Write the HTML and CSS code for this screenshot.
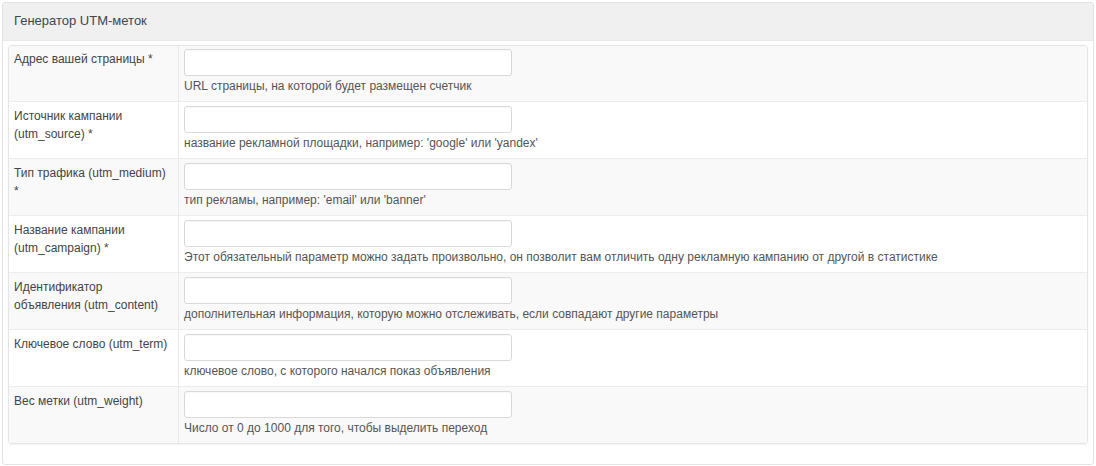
FILE: index.html
```html
<!DOCTYPE html>
<html lang="ru">
<head>
<meta charset="utf-8">
<title>Генератор UTM-меток</title>
<link rel="stylesheet" href="styles.css">
</head>
<body>
<div class="panel">
  <div class="panel-heading">Генератор UTM-меток</div>
  <div class="panel-body">
    <div class="form-table">
      <div class="row">
        <div class="label">Адрес вашей страницы *</div>
        <div class="field"><input class="input" type="text"><div class="help">URL страницы, на которой будет размещен счетчик</div></div>
      </div>
      <div class="row">
        <div class="label">Источник кампании (utm_source) *</div>
        <div class="field"><input class="input" type="text"><div class="help">название рекламной площадки, например: 'google' или 'yandex'</div></div>
      </div>
      <div class="row">
        <div class="label">Тип трафика (utm_medium) *</div>
        <div class="field"><input class="input" type="text"><div class="help">тип рекламы, например: 'email' или 'banner'</div></div>
      </div>
      <div class="row">
        <div class="label">Название кампании (utm_campaign) *</div>
        <div class="field"><input class="input" type="text"><div class="help">Этот обязательный параметр можно задать произвольно, он позволит вам отличить одну рекламную кампанию от другой в статистике</div></div>
      </div>
      <div class="row">
        <div class="label">Идентификатор объявления (utm_content)</div>
        <div class="field"><input class="input" type="text"><div class="help">дополнительная информация, которую можно отслеживать, если совпадают другие параметры</div></div>
      </div>
      <div class="row">
        <div class="label">Ключевое слово (utm_term)</div>
        <div class="field"><input class="input" type="text"><div class="help">ключевое слово, с которого начался показ объявления</div></div>
      </div>
      <div class="row">
        <div class="label">Вес метки (utm_weight)</div>
        <div class="field"><input class="input" type="text"><div class="help">Число от 0 до 1000 для того, чтобы выделить переход</div></div>
      </div>
    </div>
  </div>
</div>
</body>
</html>
```

FILE: styles.css
```css
* { box-sizing: border-box; }

html, body {
  margin: 0;
  background: #fff;
}

body {
  padding: 2px 2px 0 2px;
  font-family: "Liberation Sans", Arial, sans-serif;
  color: #444;
}

.panel {
  border: 1px solid #e3e3e3;
  border-radius: 3px;
  height: 463px;
  width: 1092px;
  display: flex;
  flex-direction: column;
}

.panel-heading {
  background: #f0f0f0;
  height: 38px;
  padding: 10px 11px 0;
  font-size: 13px;
  color: #3c4650;
  border-bottom: 1px solid #e8e8e8;
}

.panel-body {
  padding: 4px 5px 0 5px;
}

.form-table {
  border: 1px solid #e5e5e5;
  border-radius: 3px;
  box-shadow: 0 1px 1px rgba(0, 0, 0, 0.04);
}

.row {
  display: flex;
  height: 57px;
  border-top: 1px solid #ececec;
}

.row:first-child { border-top: none; height: 55px; }
.row:first-child .field { padding-top: 3px; }
.row:first-child .label { padding-top: 4px; }

.row:nth-child(odd) { background: #f9f9f9; }
.row:nth-child(even) { background: #fff; }

.label {
  width: 170px;
  flex: none;
  border-right: 1px solid #e8e8e8;
  padding: 5px 10px 0 5px;
  font-size: 12px;
  line-height: 18px;
  color: #444;
}

.field {
  padding: 4px 5px 0 5px;
  flex: 1;
}

.input {
  display: block;
  width: 328px;
  height: 27px;
  margin: 0;
  border: 1px solid #d9d9d9;
  border-radius: 3px;
  background: #fff;
  box-shadow: inset 0 1px 1px rgba(0, 0, 0, 0.03);
}

.help {
  margin-top: 2px;
  font-size: 12px;
  line-height: 17px;
  color: #555;
}
```
